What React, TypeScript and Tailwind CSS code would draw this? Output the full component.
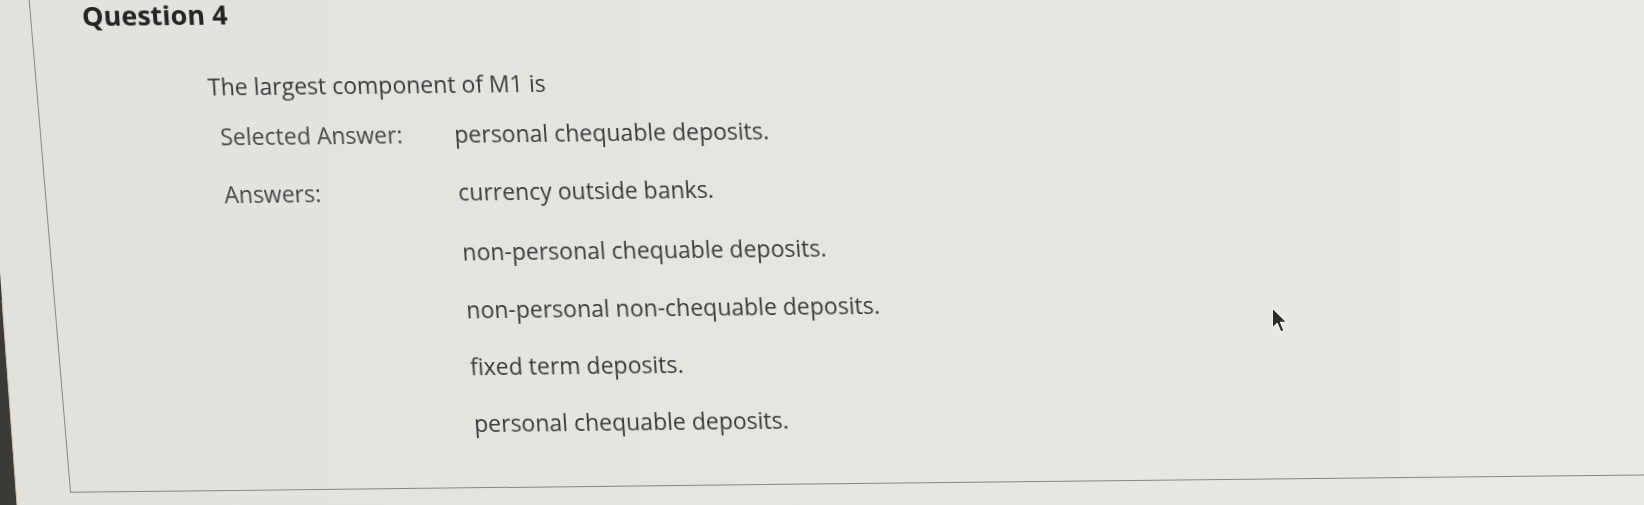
import React from "react";

const options = [
  { text: "currency outside banks.", gap: "" },
  { text: "non-personal chequable deposits.", gap: "mt-[36px]" },
  { text: "non-personal non-chequable deposits.", gap: "mt-[35px]" },
  { text: "fixed term deposits.", gap: "mt-[34px]" },
  { text: "personal chequable deposits.", gap: "mt-[34px]" },
];

function Cursor() {
  return (
    <svg
      className="absolute left-[1271px] top-[306px]"
      width="18"
      height="29"
      viewBox="0 0 14 22"
    >
      <path
        d="M1 1 L1 17 L4.8 13.4 L7.6 20 L10.2 18.9 L7.5 12.5 L12.6 12.5 Z"
        fill="#2a2a2a"
        stroke="#f1f1ec"
        strokeWidth="1.1"
        strokeLinejoin="round"
      />
    </svg>
  );
}

function Bezel() {
  return (
    <svg className="absolute left-0 top-0" width="30" height="505" viewBox="0 0 30 505">
      <polygon points="0,272 2,300 17,505 0,505" fill="#3a3a37" />
      <polyline points="2,300 17,505" fill="none" stroke="#cdbfae" strokeWidth="1" />
    </svg>
  );
}

export default function App() {
  return (
    <div className="relative h-[505px] w-[1644px] overflow-hidden bg-gradient-to-r from-[#e2e2dd] via-[#e6e6e1] to-[#e8e9e3] font-['Open_Sans',sans-serif]">
      <div className="origin-top-left [transform:matrix(1,-0.011,0.084,1,0,0)]">
        <div className="ml-[27px] mt-[-20px] h-[513px] w-[1720px] border-b-[1.5px] border-l-[1.5px] border-[#878883] pl-[51px] pt-[26.5px]">
          <div className="origin-top-left blur-[0.3px] [transform:skewX(-0.9deg)]">
            <h2 className="text-[27px] font-bold leading-[20px] text-[#242424]">Question 4</h2>
            <div className="ml-[121px] mt-[50.5px] text-[23px] leading-[23px] text-[#3a3a3a]">
              The largest component of M1 is
            </div>
            <div className="ml-[130px] mt-[27px] grid grid-cols-[234px_auto] gap-y-[35px] text-[23px] leading-[23px]">
              <div className="text-[#474747]">Selected Answer:</div>
              <div className="text-[#3a3a3a]">personal chequable deposits.</div>
              <div className="text-[#474747]">Answers:</div>
              <div className="flex flex-col text-[#3a3a3a]">
                {options.map((o, i) => (
                  <div key={i} className={o.gap}>
                    {o.text}
                  </div>
                ))}
              </div>
            </div>
          </div>
        </div>
      </div>
      <Cursor />
      <Bezel />
    </div>
  );
}
